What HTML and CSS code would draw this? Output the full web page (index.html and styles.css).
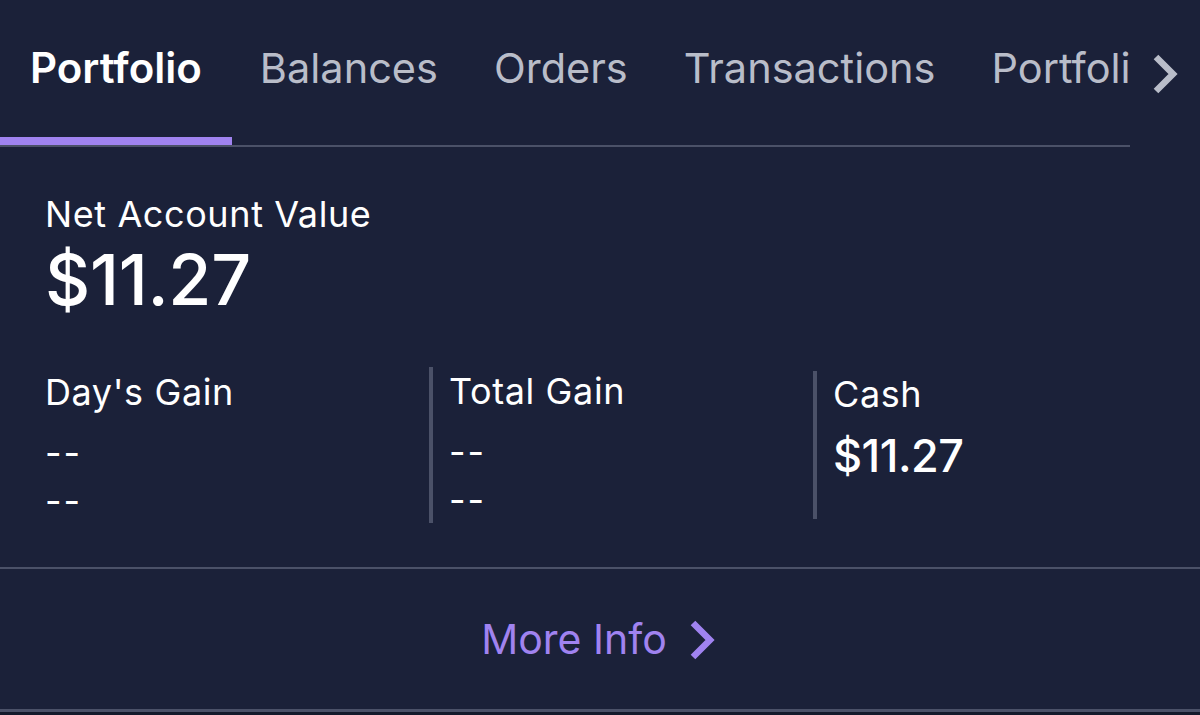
FILE: index.html
```html
<!DOCTYPE html>
<html>
<head>
<meta charset="utf-8">
<link rel="stylesheet" href="styles.css">
</head>
<body>
<div class="screen">
  <div class="tabbar">
    <div class="tabs">
      <div class="tab active">Portfolio</div>
      <div class="tab">Balances</div>
      <div class="tab">Orders</div>
      <div class="tab">Transactions</div>
      <div class="tab">Portfolio Analysis</div>
    </div>
    <svg class="tab-next" width="28" height="44" viewBox="0 0 28 44"><path d="M4 5 L21 22 L4 39" fill="none" stroke="#b9bdc9" stroke-width="6.5" stroke-linejoin="miter"/></svg>
  </div>
  <div class="summary">
    <div class="label">Net Account Value</div>
    <div class="big">$11.27</div>
    <div class="stats">
      <div class="stat">
        <div class="label">Day's Gain</div>
        <div class="dash">--</div>
        <div class="dash">--</div>
      </div>
      <div class="stat bordered">
        <div class="label">Total Gain</div>
        <div class="dash">--</div>
        <div class="dash">--</div>
      </div>
      <div class="stat bordered short">
        <div class="label">Cash</div>
        <div class="cash">$11.27</div>
      </div>
    </div>
  </div>
  <div class="more">
    <span>More Info</span>
    <svg width="28" height="44" viewBox="0 0 28 44"><path d="M4 5 L21 22 L4 39" fill="none" stroke="#a083f0" stroke-width="6.5" stroke-linejoin="miter"/></svg>
  </div>
  <div class="foot"></div>
</div>
</body>
</html>
```

FILE: styles.css
```css
html, body {
  margin: 0;
  padding: 0;
  background: #1b2139;
}
body {
  font-family: Inter, "Noto Sans", sans-serif;
  color: #ffffff;
  width: 1200px;
  height: 715px;
  overflow: hidden;
}
.screen {
  display: flex;
  flex-direction: column;
  height: 715px;
}
.tabbar {
  display: flex;
  align-items: flex-start;
  height: 147px;
}
.tabs {
  display: flex;
  width: 1130px;
  overflow: hidden;
  border-bottom: 2px solid #4b5168;
  height: 145px;
  flex: none;
}
.tab {
  flex: none;
  padding: 43px 28px 0;
  font-size: 41.5px;
  line-height: 50px;
  color: #b9bdc9;
  white-space: nowrap;
  letter-spacing: 0;
  height: 102px;
}
.tab.active {
  color: #ffffff;
  font-weight: 600;
  font-size: 42px;
  padding-left: 30px;
  padding-right: 30px;
  border-bottom: 10px solid #a083f0;
  margin-bottom: -2px;
  height: 94px;
  letter-spacing: 0;
}
.tab-next {
  margin: 52px 0 0 22px;
  flex: none;
}
.summary {
  padding: 46px 0 0 45px;
  height: 374px;
}
.label {
  font-size: 36px;
  line-height: 42px;
  color: #ffffff;
  letter-spacing: 0.6px;
}
.big {
  font-size: 70px;
  line-height: 84px;
  font-weight: 500;
  letter-spacing: -0.3px;
  margin-top: 3px;
}
.stats {
  display: flex;
  margin-top: 45px;
}
.stat {
  width: 385px;
  height: 156px;
  flex: none;
  box-sizing: border-box;
}
.stat.bordered {
  border-left: 4px solid #4b5168;
  padding-left: 16px;
  margin-left: -1px;
}
.stat .label { margin-top: 4px; }
.stat.bordered .label { margin-top: 3px; }
.stat.short {
  height: 148px;
  margin-top: 4px;
}
.stat.short .label { margin-top: 2px; }
.dash {
  font-size: 36px;
  line-height: 48px;
  letter-spacing: 2px;
  margin-top: 16px;
}
.stat .dash + .dash { margin-top: 0; }
.cash {
  font-size: 45px;
  line-height: 60px;
  font-weight: 500;
  letter-spacing: -0.5px;
  margin-top: 11px;
}
.more {
  border-top: 2px solid #4b5168;
  height: 140px;
  display: flex;
  align-items: center;
  justify-content: center;
  gap: 22px;
  color: #a083f0;
  font-size: 41px;
  padding-right: 2px;
}
.more svg { margin-top: 2px; }
.foot {
  border-top: 3px solid #4b5168;
  background: #141a2c;
  flex: 1;
}
```
